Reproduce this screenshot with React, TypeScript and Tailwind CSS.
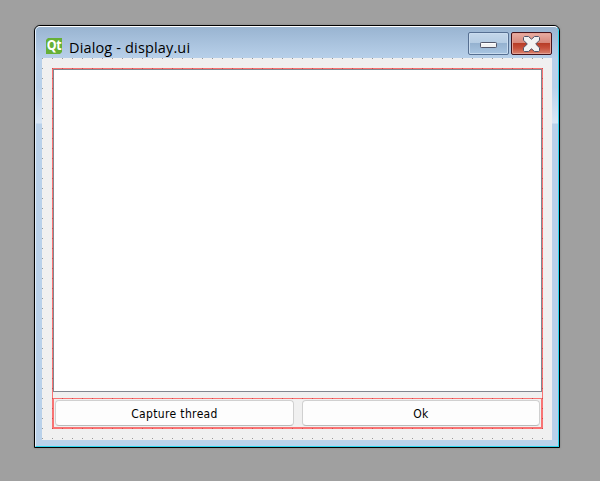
import React from "react";

function QtLogo() {
  return (
    <div className="mt-[11px] flex h-4 w-4 items-center justify-center bg-[#66b036] [clip-path:polygon(2px_0,100%_0,100%_14px,14px_100%,0_100%,0_2px)]">
      <span className="-mt-px scale-y-110 font-['Noto_Sans','Open_Sans',sans-serif] text-[12.5px] font-bold leading-4 tracking-[-0.5px] text-white">
        Qt
      </span>
    </div>
  );
}

function MinimizeButton() {
  return (
    <button
      aria-label="Minimize"
      className="flex h-[23px] w-[41px] items-start justify-center rounded-[2px] border border-[#566f91] bg-[linear-gradient(#c4d7ea_0,#b5cce3_10px,#94b1cf_10px,#a9c5e1_100%)] pt-[9px] shadow-[inset_0_0_0_1px_#c9dcef]"
    >
      <svg width="17" height="6" viewBox="0 0 17 6">
        <rect x=".5" y=".5" width="16" height="5" rx=".8" fill="#f2f2f2" stroke="#53576a" />
        <path d="M1.5 1.5h14" stroke="#fff" />
      </svg>
    </button>
  );
}

function CloseButton() {
  return (
    <button
      aria-label="Close"
      className="flex h-[23px] w-[41px] items-start justify-center rounded-[2px] border border-[#43131c] bg-[linear-gradient(#e9aea4_0,#d7877a_10px,#b63b25_10px,#c7503b_15px,#d88370_100%)] pt-[3px] shadow-[inset_0_0_0_1px_#e5a194]"
    >
      <svg width="17" height="16" viewBox="0 0 17 16">
        <path
          d="M1.5.5h4l3 2.700 3-2.700h4l1 1v2.700L12.700 8l3.800 3.800v2.700l-1 1h-4l-3-2.700-3 2.700h-4l-1-1v-2.700L4.300 8 .500 4.200V1.500z"
          fill="#f3f3f3"
          stroke="#50556a"
          strokeWidth="1"
          strokeLinejoin="round"
        />
      </svg>
    </button>
  );
}

function FormButton({ label, className }: { label: string; className: string }) {
  return (
    <button
      className={`h-[26px] rounded-[4px] border border-[#d0d0d0] border-b-[#b9b9b9] bg-[#fdfdfd] pt-px font-['DejaVu_Sans_Condensed','DejaVu_Sans',sans-serif] text-[12px] leading-[23px] tracking-[0.35px] text-black ${className}`}
    >
      <span className="relative top-px">{label}</span>
    </button>
  );
}

export default function App() {
  return (
    <main className="h-[481px] w-[600px] overflow-hidden bg-[#a0a0a0] pl-[34px] pt-[25px]">
      <section className="h-[423px] w-[526px] overflow-hidden rounded-t-[6px] border border-black bg-[#b9d1ea] shadow-[0_0_2px_#777]">
        <div className="h-full rounded-t-[5px] border border-b-[#2cd5ee] border-l-[#e4effa] border-r-[#2cd5ee] border-t-white bg-[linear-gradient(#99b4d1_0,#b9d1ea_32px,#b9d1ea_60px,#d9e7f6_96px,#b9d1ea_97px,#b9d1ea_100%)] px-[6px]">
          <header className="flex h-[31px] items-start">
            <div className="w-[4px]" />
            <QtLogo />
            <h1 className="ml-[7px] mt-[11px] flex-1 whitespace-nowrap font-['Open_Sans','Noto_Sans',sans-serif] text-[14.5px] font-normal leading-5 tracking-[0.15px] text-black">
              Dialog - display.ui
            </h1>
            <div className="mt-[5px] flex gap-[2px]">
              <MinimizeButton />
              <CloseButton />
            </div>
          </header>
          <div className="h-[382px] w-[510px] bg-[#f0f0f0] bg-[conic-gradient(from_270deg_at_1px_1px,#999_90deg,transparent_90deg)] bg-[length:10px_10px] pl-[10px] pt-[10px]">
            <div className="h-[361px] w-[491px]">
              <div className="h-[330px] border-x border-t border-[#ff000085]">
                <div className="h-[323px] border border-[#828790] bg-white" />
              </div>
              <div className="flex h-[31px] gap-2 border-x-2 border-b-2 border-t border-[#ff000085] pl-px pt-px">
                <FormButton label="Capture thread" className="w-[239px]" />
                <FormButton label="Ok" className="w-[238px]" />
              </div>
            </div>
          </div>
        </div>
      </section>
    </main>
  );
}
